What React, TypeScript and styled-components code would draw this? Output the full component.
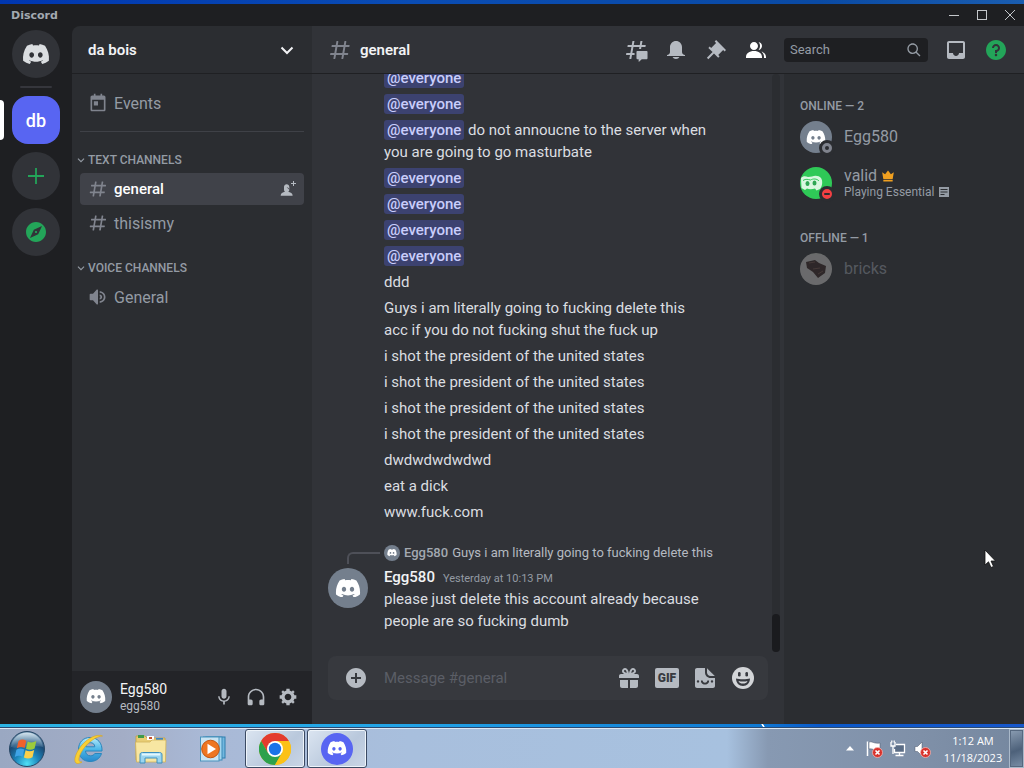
import React from "react";
import styled, { createGlobalStyle } from "styled-components";

const c = {
  rail: "#1e1f22",
  side: "#2b2d31",
  chat: "#313338",
  panel: "#232428",
  input: "#383a40",
  line: "#1f2023",
  muted: "#949ba4",
  icon: "#b5bac1",
  text: "#dbdee1",
  white: "#f2f3f5",
  green: "#23a559",
  blurple: "#5865f2",
};

const GlobalStyle = createGlobalStyle`
  * { box-sizing: border-box; }
  body { margin: 0; background: ${c.rail}; font-family: Roboto, "Noto Sans", sans-serif; font-size: 15px; color: ${c.text}; overflow: hidden; }
  button { border: 0; padding: 0; margin: 0; background: none; color: inherit; font: inherit; cursor: pointer; }
  input { border: 0; padding: 0; margin: 0; background: none; outline: 0; font: inherit; }
  h1, h2, h3, p, ul { margin: 0; padding: 0; font-weight: inherit; font-size: inherit; }
  ul { list-style: none; }
  a { color: inherit; text-decoration: none; }
  svg { display: block; flex: none; }
`;

/* ---------- icons ---------- */

const PATHS = {
  hash: "M5.88657 21C5.57547 21 5.3399 20.7189 5.39427 20.4126L6.00001 17H2.59511C2.28449 17 2.04905 16.7198 2.10259 16.4138L2.27759 15.4138C2.31946 15.1746 2.52722 15 2.77011 15H6.35001L7.41001 9H4.00511C3.69449 9 3.45905 8.71977 3.51259 8.41381L3.68759 7.41381C3.72946 7.17456 3.93722 7 4.18011 7H7.76001L8.39677 3.41262C8.43914 3.17391 8.64664 3 8.88907 3H9.87344C10.1845 3 10.4201 3.28107 10.3657 3.58738L9.76001 7H15.76L16.3968 3.41262C16.4391 3.17391 16.6466 3 16.8891 3H17.8734C18.1845 3 18.4201 3.28107 18.3657 3.58738L17.76 7H21.1649C21.4755 7 21.711 7.28023 21.6574 7.58619L21.4824 8.58619C21.4406 8.82544 21.2328 9 20.9899 9H17.41L16.35 15H19.7549C20.0655 15 20.301 15.2802 20.2474 15.5862L20.0724 16.5862C20.0306 16.8254 19.8228 17 19.5799 17H16L15.3632 20.5874C15.3209 20.8261 15.1134 21 14.8709 21H13.8866C13.5755 21 13.3399 20.7189 13.3943 20.4126L14 17H8.00001L7.36325 20.5874C7.32088 20.8261 7.11337 21 6.87094 21H5.88657ZM9.41045 9L8.35045 15H14.3504L15.4104 9H9.41045Z",
  threads:
    "M5.43309 21C5.35842 21 5.30189 20.9325 5.31494 20.859L5.99991 17H2.14274C2.06819 17 2.01168 16.9327 2.02453 16.8593L2.33253 15.0993C2.34258 15.0419 2.39244 15 2.45074 15H6.34991L7.40991 9H3.55274C3.47819 9 3.42168 8.93274 3.43453 8.85931L3.74253 7.09931C3.75258 7.04189 3.80244 7 3.86074 7H7.75991L8.45234 3.09903C8.46251 3.04174 8.51231 3 8.57049 3H10.3267C10.4014 3 10.4579 3.06746 10.4449 3.14097L9.75991 7H15.7599L16.4523 3.09903C16.4625 3.04174 16.5123 3 16.5705 3H18.3267C18.4014 3 18.4579 3.06746 18.4449 3.14097L17.7599 7H21.6171C21.6916 7 21.7481 7.06725 21.7353 7.14069L21.4273 8.90069C21.4172 8.95811 21.3674 9 21.3091 9H17.4099L17.0495 11.04H15.05L15.4104 9H9.41035L8.35035 15H10.5599V17H7.99991L7.30749 20.901C7.29732 20.9583 7.24752 21 7.18934 21H5.43309ZM13.4399 12.96C12.9097 12.96 12.4799 13.3898 12.4799 13.92V20.2213C12.4799 20.7515 12.9097 21.1813 13.4399 21.1813H14.3999C14.5325 21.1813 14.6399 21.2887 14.6399 21.4213V23.4597C14.6399 23.6677 14.8865 23.7773 15.0408 23.6378L17.4858 21.4289C17.6622 21.2695 17.8916 21.1813 18.1294 21.1813H22.5599C23.0901 21.1813 23.5199 20.7515 23.5199 20.2213V13.92C23.5199 13.3898 23.0901 12.96 22.5599 12.96H13.4399Z",
  bell: "M18 9V14C18 15.657 19.344 17 21 17V18H3V17C4.656 17 6 15.657 6 14V9C6 5.686 8.686 3 12 3C15.314 3 18 5.686 18 9ZM11.9999 21C10.5239 21 9.24793 20.19 8.55493 19H15.4449C14.7519 20.19 13.4759 21 11.9999 21Z",
  pin: "M22 12L12.101 2.10101L10.686 3.51401L12.101 4.92901L7.15096 9.87801V9.88001L5.73596 8.46501L4.32196 9.88001L8.56496 14.122L2.90796 19.778L4.32196 21.192L9.97896 15.536L14.222 19.778L15.636 18.364L14.222 16.95L19.171 12H19.172L20.586 13.414L22 12Z",
  members:
    "M14 8.006C14 10.211 12.206 12.006 10 12.006C7.795 12.006 6 10.211 6 8.006C6 5.801 7.794 4.006 10 4.006C12.206 4.006 14 5.801 14 8.006ZM2 19.006C2 15.473 5.29 13.006 10 13.006C14.711 13.006 18 15.473 18 19.006V20.006H2V19.006ZM20 20.006H22V19.006C22 16.443 20.27 14.442 17.521 13.535C19.062 14.913 20 16.806 20 19.006V20.006ZM14.883 11.908C16.666 11.504 18 9.908 18 8.006C18 5.969 16.469 4.282 14.497 4.037C15.432 5.095 16 6.485 16 8.006C16 9.449 15.489 10.774 14.638 11.81C14.72 11.842 14.802 11.874 14.883 11.908Z",
  inbox:
    "M19 3H4.99C3.88 3 3.01 3.89 3.01 5L3 19C3 20.1 3.88 21 4.99 21H19C20.1 21 21 20.1 21 19V5C21 3.89 20.1 3 19 3ZM19 15H15C15 16.66 13.65 18 12 18C10.35 18 9 16.66 9 15H4.99V5H19V15Z",
  help: "M12 2C6.486 2 2 6.487 2 12C2 17.515 6.486 22 12 22C17.514 22 22 17.515 22 12C22 6.487 17.514 2 12 2ZM12 18.25C11.31 18.25 10.75 17.691 10.75 17C10.75 16.31 11.31 15.75 12 15.75C12.69 15.75 13.25 16.31 13.25 17C13.25 17.691 12.69 18.25 12 18.25ZM13 13.875V15H11V12H12C13.104 12 14 11.103 14 10C14 8.896 13.104 8 12 8C10.896 8 10 8.896 10 10H8C8 7.795 9.795 6 12 6C14.205 6 16 7.795 16 10C16 11.861 14.723 13.429 13 13.875Z",
  mic: "M14.99 11C14.99 12.66 13.66 14 12 14C10.34 14 9 12.66 9 11V5C9 3.34 10.34 2 12 2C13.66 2 15 3.34 15 5L14.99 11ZM12 16.1C14.76 16.1 17.3 14 17.3 11H19C19 14.42 16.28 17.24 13 17.72V21H11V17.72C7.72 17.23 5 14.41 5 11H6.7C6.7 14 9.24 16.1 12 16.1Z",
  headphones:
    "M12 2.003C6.486 2.003 2 6.488 2 12.003V20.003C2 21.107 2.895 22.003 4 22.003H6C7.104 22.003 8 21.107 8 20.003V17.003C8 15.899 7.104 15.003 6 15.003H4V12.003C4 7.591 7.589 4.003 12 4.003C16.411 4.003 20 7.591 20 12.003V15.003H18C16.896 15.003 16 15.899 16 17.003V20.003C16 21.107 16.896 22.003 18 22.003H20C21.104 22.003 22 21.107 22 20.003V12.003C22 6.488 17.514 2.003 12 2.003Z",
  gear: "M19.738 10H22V14H19.739C19.498 14.931 19.1 15.798 18.565 16.564L20 18L18 20L16.565 18.564C15.797 19.099 14.932 19.498 14 19.738V22H10V19.738C9.069 19.498 8.203 19.099 7.436 18.564L6 20L4 18L5.436 16.564C4.901 15.799 4.502 14.932 4.262 14H2V10H4.262C4.502 9.068 4.9 8.202 5.436 7.436L4 6L6 4L7.436 5.436C8.202 4.9 9.068 4.502 10 4.262V2H14V4.261C14.932 4.502 15.797 4.9 16.565 5.435L18 3.999L20 5.999L18.564 7.436C19.099 8.202 19.498 9.069 19.738 10ZM12 16C14.209 16 16 14.209 16 12C16 9.791 14.209 8 12 8C9.791 8 8 9.791 8 12C8 14.209 9.791 16 12 16Z",
  speaker:
    "M11.383 3.079C11.009 2.925 10.579 3.01 10.293 3.296L6 8.002H3C2.45 8.002 2 8.453 2 9.002V15.002C2 15.552 2.45 16.002 3 16.002H6L10.293 20.71C10.579 20.996 11.009 21.082 11.383 20.927C11.757 20.772 12 20.407 12 20.002V4.002C12 3.599 11.757 3.232 11.383 3.079ZM14 5.002V7.002C16.757 7.002 19 9.246 19 12.002C19 14.759 16.757 17.002 14 17.002V19.002C17.86 19.002 21 15.863 21 12.002C21 8.143 17.86 5.002 14 5.002ZM14 9.002C15.654 9.002 17 10.349 17 12.002C17 13.657 15.654 15.002 14 15.002V13.002C14.551 13.002 15 12.553 15 12.002C15 11.451 14.551 11.002 14 11.002V9.002Z",
  gift: "M16.886 7.999H20C21.104 7.999 22 8.896 22 9.999V11.999H2V9.999C2 8.896 2.897 7.999 4 7.999H7.114C6.663 7.764 6.236 7.477 5.879 7.121C4.709 5.951 4.709 4.048 5.879 2.879C7.012 1.746 8.986 1.746 10.121 2.877C11.758 4.514 11.979 7.595 11.998 7.941L12.002 7.941C12.021 7.595 12.242 4.514 13.879 2.877C15.014 1.745 16.986 1.746 18.121 2.877C19.29 4.049 19.29 5.952 18.121 7.121C17.764 7.477 17.337 7.764 16.886 7.999ZM7.293 5.707C6.903 5.316 6.903 4.682 7.293 4.292C7.481 4.103 7.732 4 8 4C8.268 4 8.519 4.103 8.707 4.292C9.297 4.882 9.641 5.94 9.825 6.822C8.945 6.639 7.879 6.293 7.293 5.707ZM14.174 6.824C14.359 5.941 14.702 4.883 15.293 4.293C15.481 4.103 15.732 4 16 4C16.268 4 16.519 4.103 16.706 4.291C17.096 4.682 17.097 5.316 16.707 5.707C16.116 6.298 15.057 6.642 14.174 6.824ZM3 13.999V19.999C3 21.102 3.896 21.999 5 21.999H11V13.999H3ZM13 13.999V21.999H19C20.104 21.999 21 21.102 21 19.999V13.999H13Z",
  calendar:
    "M7 1H9V3H15V1H17V3H19C20.1 3 21 3.9 21 5V20C21 21.1 20.1 22 19 22H5C3.9 22 3 21.1 3 20V5C3 3.9 3.9 3 5 3H7V1ZM5 8V20H19V8H5ZM7 10H12V15H7V10Z",
  plus: "M20 11.111H12.889V4H11.111V11.111H4V12.889H11.111V20H12.889V12.889H20V11.111Z",
  attach:
    "M12 2C6.477 2 2 6.477 2 12C2 17.522 6.477 22 12 22C17.523 22 22 17.522 22 12C22 6.477 17.522 2 12 2ZM17 13H13V17H11V13H7V11H11V7H13V11H17V13Z",
  compass:
    "M12 2C6.48 2 2 6.48 2 12C2 17.52 6.48 22 12 22C17.52 22 22 17.52 22 12C22 6.48 17.52 2 12 2ZM14.19 14.19L6 18L9.81 9.81L18 6L14.19 14.19ZM12 10.9C11.39 10.9 10.9 11.39 10.9 12C10.9 12.61 11.39 13.1 12 13.1C12.61 13.1 13.1 12.61 13.1 12C13.1 11.39 12.61 10.9 12 10.9Z",
  search:
    "M21.707 20.293L16.314 14.9C17.403 13.504 18 11.799 18 10C18 7.863 17.167 5.854 15.656 4.344C14.146 2.832 12.137 2 10 2C7.863 2 5.854 2.832 4.344 4.344C2.833 5.854 2 7.863 2 10C2 12.137 2.833 14.146 4.344 15.656C5.854 17.168 7.863 18 10 18C11.799 18 13.504 17.404 14.9 16.314L20.293 21.706L21.707 20.293ZM10 16C8.397 16 6.891 15.376 5.758 14.243C4.624 13.11 4 11.603 4 10C4 8.398 4.624 6.891 5.758 5.758C6.891 4.624 8.397 4 10 4C11.603 4 13.109 4.624 14.242 5.758C15.376 6.891 16 8.398 16 10C16 11.603 15.376 13.11 14.242 14.243C13.109 15.376 11.603 16 10 16Z",
  crown: "M2 5.5L7 9L12 2.5L17 9L22 5.5L20 17H4L2 5.5ZM4 18.5H20V21.5H4V18.5Z",
  invite:
    "M21 3H24V4.5H21V7.5H19.5V4.5H16.5V3H19.5V0H21V3ZM10 9.5C12.4 9.5 14 11.3 14 13.2C14 15.2 12.2 16.2 12.2 16.2C15.6 16.7 19 18.6 19 22H1C1 18.6 4 16.7 7.6 16.2C7.6 16.2 6 15.2 6 13.2V9C6 6.8 7.8 5 10 5C12.2 5 14 6.8 14 9V13.2Z",
  activity:
    "M2 2H22V22H2V2ZM5 6V8H19V6H5ZM5 11V13H19V11H5ZM5 16V18H13V16H5Z",
};

const Icon = ({ name, size = 24 }: { name: keyof typeof PATHS; size?: number }) => (
  <svg width={size} height={size} viewBox="0 0 24 24" fill="currentColor" fillRule="evenodd" aria-hidden="true">
    <path d={PATHS[name]} />
  </svg>
);

const CLYDE =
  "M23.0212 1.67671C21.3107 0.879656 19.5079 0.318797 17.6584 0C17.4062 0.461742 17.1749 0.934541 16.9708 1.4184C15.003 1.12145 12.9974 1.12145 11.0283 1.4184C10.819 0.934541 10.589 0.461744 10.3368 0.00546311C8.48074 0.324393 6.67795 0.885118 4.96746 1.68231C1.56727 6.77853 0.649666 11.7538 1.11108 16.652C3.10102 18.1418 5.3262 19.2743 7.69177 20C8.22338 19.2743 8.69519 18.4993 9.09812 17.691C8.32996 17.3997 7.58522 17.0424 6.87684 16.6135C7.06531 16.4762 7.24726 16.3387 7.42403 16.1847C11.5911 18.1749 16.408 18.1749 20.5763 16.1847C20.7531 16.3332 20.9351 16.4762 21.1171 16.6135C20.41 17.0369 19.6639 17.3997 18.897 17.691C19.3052 18.4993 19.7718 19.2689 20.3021 19.9945C22.6677 19.2689 24.8929 18.1364 26.8828 16.6466H26.8893C27.43 10.9731 25.9665 6.04728 23.0212 1.67671ZM9.68041 13.6383C8.39754 13.6383 7.34085 12.4453 7.34085 10.994C7.34085 9.54272 8.37155 8.34973 9.68041 8.34973C10.9893 8.34973 12.0395 9.54272 12.0187 10.994C12.0187 12.4453 10.9828 13.6383 9.68041 13.6383ZM18.3161 13.6383C17.0332 13.6383 15.9765 12.4453 15.9765 10.994C15.9765 9.54272 17.0124 8.34973 18.3161 8.34973C19.6184 8.34973 20.6751 9.54272 20.6543 10.994C20.6543 12.4453 19.6184 13.6383 18.3161 13.6383Z";

const Clyde = ({ width = 28 }: { width?: number }) => (
  <svg width={width} height={(width * 20) / 28} viewBox="0 0 28 20" fill="currentColor" aria-hidden="true">
    <path d={CLYDE} />
  </svg>
);

const Chevron = ({ size, stroke }: { size: number; stroke: number }) => (
  <svg width={size} height={size} viewBox="0 0 18 18" fill="none" stroke="currentColor" strokeWidth={stroke} aria-hidden="true">
    <path d="M3.5 6.5L9 12L14.5 6.5" />
  </svg>
);

const Sticker = () => (
  <svg width="24" height="24" viewBox="0 0 24 24" fill="currentColor" aria-hidden="true">
    <path
      fillRule="evenodd"
      d="M4 2H12V6.5C12 9.5 14.5 12 17.5 12H22V20C22 21.1 21.1 22 20 22H4C2.9 22 2 21.1 2 20V4C2 2.9 2.9 2 4 2ZM5 14.2A1.2 1.2 0 1 0 5 16.6A1.2 1.2 0 1 0 5 14.2ZM19 14.2A1.2 1.2 0 1 0 19 16.6A1.2 1.2 0 1 0 19 14.2ZM8 14.6V16C9 18 10.4 18.6 12 18.6C13.6 18.6 15 18 16 16V14.6H14.4C14 16.2 13.2 16.8 12 16.8C10.8 16.8 10 16.2 9.6 14.6H8Z"
    />
    <path d="M14 2.2L21.8 10H17.5C15.6 10 14 8.4 14 6.5V2.2Z" />
  </svg>
);

const Smile = () => (
  <svg width="24" height="24" viewBox="0 0 24 24" aria-hidden="true">
    <circle cx="12" cy="12" r="11" fill="#d3d5d8" />
    <rect x="7" y="6" width="2.6" height="4.6" rx="1.3" fill="#383a40" />
    <rect x="14.4" y="6" width="2.6" height="4.6" rx="1.3" fill="#383a40" />
    <path d="M5 12.5C8 13.6 16 13.6 19 12.5C19 17 16 20 12 20C8 20 5 17 5 12.5Z" fill="#383a40" />
    <path d="M7.5 15C10 15.8 14 15.8 16.5 15C16 17 14 17.6 12 17.6C10 17.6 8 17 7.5 15Z" fill="#d3d5d8" />
  </svg>
);

/* ---------- frame ---------- */

const Desktop = styled.div`
  height: 100vh;
  display: flex;
  flex-direction: column;
`;

const TopStrip = styled.div`
  flex: none;
  height: 4px;
  background: linear-gradient(90deg, #0036b0, #0a4cb4 40%, #0a4aa4 80%, #1a5db0);
`;

const BottomStrip = styled.div`
  flex: none;
  height: 4px;
  background:
    linear-gradient(60deg, transparent 48%, #fff 49%, #fff 51%, transparent 52%) 76% 0 / 60px 100% no-repeat,
    linear-gradient(90deg, #2cb4e4, #22a4e8 40%, #0f7ad4 74%, #0a58c8 80%, #1757cc);
  border-bottom: 1px solid #2c4a72;
`;

const TitleBar = styled.header`
  flex: none;
  height: 22px;
  display: flex;
  justify-content: space-between;
  background: ${c.rail};
`;

const Wordmark = styled.span`
  padding-left: 11px;
  font: bold 11px/24px "DejaVu Sans", sans-serif;
  color: #a3a9b1;
`;

const WindowButtons = styled.div`
  display: flex;
`;

const WindowButton = styled.button`
  width: 28px;
  display: grid;
  place-items: center;
  color: #c4c7cb;
`;

const Body = styled.div`
  flex: 1;
  min-height: 0;
  display: flex;
  background: ${c.rail};
`;

/* ---------- server rail ---------- */

const Rail = styled.nav`
  flex: none;
  width: 72px;
  display: flex;
  flex-direction: column;
  align-items: center;
  gap: 8px;
  padding-top: 4px;
`;

const Server = styled.button<{ $active?: boolean; $tone?: string }>`
  position: relative;
  width: 48px;
  height: 48px;
  display: grid;
  place-items: center;
  border-radius: ${(p) => (p.$active ? 16 : 24)}px;
  background: ${(p) => (p.$active ? c.blurple : c.chat)};
  color: ${(p) => p.$tone || c.text};
  font-size: 18px;
  font-weight: 500;
`;

const Pill = styled.span`
  position: absolute;
  left: -12px;
  top: 4px;
  width: 4px;
  height: 40px;
  border-radius: 0 4px 4px 0;
  background: #fff;
`;

const RailLine = styled.div`
  width: 32px;
  height: 2px;
  border-radius: 1px;
  background: #35363c;
`;

/* ---------- channel sidebar ---------- */

const Sidebar = styled.aside`
  flex: none;
  width: 240px;
  display: flex;
  flex-direction: column;
  background: ${c.side};
  border-top-left-radius: 8px;
`;

const ServerHeader = styled.button`
  height: 48px;
  flex: none;
  display: flex;
  align-items: center;
  justify-content: space-between;
  padding: 0 16px;
  border-bottom: 1px solid ${c.line};
  color: ${c.white};
  font-weight: 600;
`;

const ChannelScroller = styled.div`
  flex: 1;
  min-height: 0;
  padding: 13px 8px 0;
`;

const ChannelList = styled.ul`
  display: flex;
  flex-direction: column;
  gap: 2px;
  padding-bottom: 1px;
`;

const Channel = styled.a<{ $selected?: boolean }>`
  height: 32px;
  display: flex;
  align-items: center;
  gap: 6px;
  padding: 0 8px;
  border-radius: 4px;
  background: ${(p) => (p.$selected ? "#404249" : "transparent")};
  color: ${(p) => (p.$selected ? "#fff" : c.muted)};
  font-size: ${(p) => (p.$selected ? 15 : 16)}px;
  font-weight: ${(p) => (p.$selected ? 500 : 400)};
  > svg:first-child { color: #80848e; }
`;

const ChannelAction = styled.button`
  margin-left: auto;
  color: ${c.icon};
`;

const Divider = styled.div`
  height: 1px;
  margin-top: 12px;
  background: #3f4147;
`;

const Category = styled.h3`
  display: flex;
  align-items: center;
  gap: 2px;
  margin: 20px 0 5px -4px;
  font-size: 12px;
  line-height: 16px;
  font-weight: 500;
  color: ${c.muted};
`;

const UserPanel = styled.section`
  flex: none;
  height: 53px;
  display: flex;
  align-items: center;
  gap: 8px;
  padding: 0 8px 2px;
  background: ${c.panel};
`;

const UserNames = styled.div`
  flex: 1;
  font-size: 12px;
  line-height: 16px;
  color: ${c.icon};
`;

const UserName = styled.div`
  font-size: 14px;
  line-height: 18px;
  color: ${c.white};
`;

const PanelButtons = styled.div`
  display: flex;
`;

const PanelButton = styled.button`
  width: 32px;
  height: 32px;
  display: grid;
  place-items: center;
  color: ${c.icon};
`;

const Avatar = styled.span<{ $size: number; $bg?: string }>`
  position: relative;
  flex: none;
  width: ${(p) => p.$size}px;
  height: ${(p) => p.$size}px;
  display: grid;
  place-items: center;
  border-radius: 50%;
  background: ${(p) => p.$bg || "#747f8d"};
  color: #fff;
`;

/* ---------- chat ---------- */

const Main = styled.main`
  flex: 1;
  min-width: 0;
  display: flex;
  flex-direction: column;
  background: ${c.chat};
`;

const ChatHeader = styled.header`
  flex: none;
  height: 48px;
  display: flex;
  align-items: center;
  gap: 8px;
  padding: 0 16px;
  border-bottom: 1px solid ${c.line};
  color: #80848e;
`;

const ChannelTitle = styled.h1`
  flex: 1;
  color: ${c.white};
  font-weight: 600;
`;

const Toolbar = styled.div`
  display: flex;
  align-items: center;
  gap: 16px;
`;

const ToolButton = styled.button<{ $tone?: string }>`
  color: ${(p) => p.$tone || c.icon};
`;

const SearchBox = styled.label`
  width: 144px;
  height: 24px;
  display: flex;
  align-items: center;
  justify-content: space-between;
  padding: 0 6px;
  border-radius: 4px;
  background: ${c.rail};
  color: ${c.muted};
`;

const SearchInput = styled.input`
  flex: 1;
  min-width: 0;
  font-size: 13px;
  color: ${c.text};
  &::placeholder { color: ${c.muted}; opacity: 1; }
`;

const Columns = styled.div`
  flex: 1;
  min-height: 0;
  display: flex;
`;

const Chat = styled.section`
  flex: 1;
  min-width: 0;
  display: flex;
  flex-direction: column;
`;

const LogRow = styled.div`
  flex: 1;
  min-height: 0;
  display: flex;
  padding-right: 4px;
`;

const Log = styled.div`
  flex: 1;
  min-width: 0;
  display: flex;
  flex-direction: column;
  justify-content: flex-end;
  overflow: hidden;
  padding: 0 48px 22px 0;
`;

const Track = styled.div`
  width: 8px;
  margin-bottom: 4px;
  display: flex;
  flex-direction: column;
  justify-content: flex-end;
  border-radius: 4px;
  background: ${c.side};
`;

const Thumb = styled.div`
  height: 38px;
  border-radius: 4px;
  background: #1a1b1e;
`;

const Message = styled.p`
  flex: none;
  padding: 2px 0 2px 72px;
  line-height: 22px;
`;

const Mention = styled.span`
  display: inline-block;
  padding: 0 3px;
  line-height: 20px;
  border-radius: 3px;
  background: #3c4270;
  color: #c9cdfb;
  font-weight: 500;
`;

const ReplyMessage = styled.article`
  flex: none;
  display: grid;
  grid-template-columns: 40px minmax(0, 1fr);
  column-gap: 16px;
  margin-top: 17px;
  padding: 2px 0 2px 16px;
  line-height: 22px;
`;

const Spine = styled.span`
  height: 12px;
  margin: 8px -12px 0 19px;
  border-left: 2px solid #4e5058;
  border-top: 2px solid #4e5058;
  border-top-left-radius: 6px;
`;

const ReplyPreview = styled.div`
  display: flex;
  align-items: center;
  gap: 4px;
  margin-bottom: 4px;
  font-size: 13px;
  line-height: 18px;
  color: ${c.icon};
  white-space: nowrap;
  overflow: hidden;
  b { font-weight: 500; color: #a3a9b1; }
`;

const AvatarCell = styled.div`
  padding-top: 2px;
`;

const Author = styled.h3`
  height: 22px;
  display: flex;
  align-items: baseline;
  gap: 8px;
  font-weight: 500;
  color: ${c.white};
  time { font-size: 11px; font-weight: 400; color: ${c.muted}; }
`;

const Composer = styled.form`
  flex: none;
  height: 44px;
  margin: 0 16px 24px;
  display: flex;
  align-items: center;
  padding: 0 13px 0 16px;
  border-radius: 8px;
  background: #37393e;
  color: ${c.icon};
`;

const ComposerInput = styled.input`
  flex: 1;
  min-width: 0;
  margin-left: 16px;
  color: ${c.text};
  &::placeholder { color: #5b5e66; opacity: 1; }
`;

const ComposerTools = styled.div`
  display: flex;
  align-items: center;
  gap: 14px;
`;

const GifButton = styled.button`
  width: 24px;
  height: 20px;
  border-radius: 2px;
  background: ${c.icon};
  color: ${c.input};
  font-size: 12px;
  font-weight: 900;
  line-height: 20px;
  text-align: center;
`;

/* ---------- members ---------- */

const Members = styled.aside`
  flex: none;
  width: 240px;
  padding: 1px 8px 0;
  background: ${c.side};
`;

const MemberHeading = styled.h2`
  padding: 23px 0 0 8px;
  font-size: 12px;
  line-height: 16px;
  font-weight: 500;
  color: ${c.muted};
`;

const Member = styled.a<{ $dim?: boolean }>`
  height: 44px;
  margin: 1px 0 2px;
  display: flex;
  align-items: center;
  gap: 12px;
  padding: 0 8px;
  color: ${c.muted};
  opacity: ${(p) => (p.$dim ? 0.4 : 1)};
`;

const MemberName = styled.div`
  display: flex;
  align-items: center;
  gap: 4px;
  font-size: 16px;
  line-height: 18px;
  > svg { color: #f0a020; }
`;

const Activity = styled.div`
  display: flex;
  align-items: center;
  gap: 4px;
  font-size: 12px;
  line-height: 14px;
`;

const Status = styled.span<{ $kind: "offline" | "dnd" }>`
  position: absolute;
  right: -3px;
  bottom: -3px;
  width: 16px;
  height: 16px;
  display: grid;
  place-items: center;
  border: 3px solid ${c.side};
  border-radius: 50%;
  background: ${(p) => (p.$kind === "dnd" ? "#f23f43" : "#80848e")};
  &::after {
    content: "";
    width: ${(p) => (p.$kind === "dnd" ? 6 : 4)}px;
    height: ${(p) => (p.$kind === "dnd" ? 2 : 4)}px;
    border-radius: 2px;
    background: ${c.side};
  }
`;

const Cursor = styled.svg`
  position: fixed;
  right: 28px;
  bottom: 199px;
  pointer-events: none;
`;

/* ---------- taskbar ---------- */

const Taskbar = styled.footer`
  flex: none;
  height: 40px;
  display: flex;
  align-items: stretch;
  border-top: 1px solid #dce8f4;
  background: linear-gradient(90deg, #9aa8c2, #a3adc6 12%, #a9b9d6 20%, #a8bfdd 40%, #a7c1df 71%, #8799b2 75%, #7f90a8 90%, #75879f);
`;

const Launchers = styled.div`
  flex: 1;
  display: flex;
  align-items: center;
  gap: 2px;
`;

const Launcher = styled.button<{ $open?: boolean }>`
  width: 60px;
  height: 39px;
  display: grid;
  place-items: center;
  border: 1px solid ${(p) => (p.$open ? "#3b4a63" : "transparent")};
  border-radius: 3px;
  box-shadow: ${(p) => (p.$open ? "inset 0 0 0 1px #eef4fa" : "none")};
  background: ${(p) => (p.$open ? "linear-gradient(135deg, #dbe5f1, #b9c8dc 60%, #cad6e6)" : "none")};
`;

const StartButton = styled.button`
  width: 54px;
  margin-right: 3px;
  display: grid;
  place-items: center;
`;

const Tray = styled.div`
  display: flex;
  align-items: center;
  gap: 6px;
`;

const TrayButton = styled.button`
  width: 18px;
  height: 18px;
  display: grid;
  place-items: center;
`;

const Clock = styled.time`
  margin: 0 2px;
  width: 68px;
  text-align: center;
  color: #fff;
  font: 11px/17px "Open Sans", sans-serif;
`;

const ShowDesktop = styled.button`
  width: 15px;
  align-self: stretch;
  border: 1px solid #a9b8c9;
  box-shadow: inset 0 0 0 1px #56687f;
  background: linear-gradient(160deg, #8b9db3, #4d617a 55%, #7b8fa7);
`;

const StartOrb = () => (
  <svg width="38" height="38" viewBox="0 0 38 38" aria-hidden="true">
    <defs>
      <radialGradient id="orb" cx="50%" cy="92%" r="85%">
        <stop offset="0" stopColor="#4fe0f5" />
        <stop offset="0.4" stopColor="#1c85bb" />
        <stop offset="0.75" stopColor="#1b4a75" />
        <stop offset="1" stopColor="#5f86a6" />
      </radialGradient>
      <linearGradient id="orbShine" x1="0" y1="0" x2="0" y2="1">
        <stop offset="0" stopColor="#e8f3f9" stopOpacity="0.85" />
        <stop offset="1" stopColor="#9cc2d8" stopOpacity="0.15" />
      </linearGradient>
    </defs>
    <circle cx="19" cy="19" r="17.5" fill="url(#orb)" stroke="#274765" />
    <path d="M3 17C4 8 11 2.500 19 2.500C27 2.500 34 8 35 17C27 14 12 20 3 17Z" fill="url(#orbShine)" />
    <path d="M10.500 11C13 9.200 15.500 9.200 18.300 10.800L16.600 18C14 16.500 11.500 16.700 8.800 18.200Z" fill="#f0602b" />
    <path d="M19.700 11.400C22.500 13 25.300 12.700 28.300 11L26.600 18.400C23.800 20 21 20.200 18 18.700Z" fill="#9ccb3b" />
    <path d="M8.400 19.700C11 18.200 13.600 18.200 16.200 19.600L14.500 26.800C12 25.400 9.500 25.600 6.800 27Z" fill="#3fa3e6" />
    <path d="M17.600 20.200C20.500 21.700 23.300 21.500 26.200 19.900L24.500 27.200C21.700 28.800 18.800 28.900 15.900 27.400Z" fill="#fbd04a" />
  </svg>
);

const Explorer = () => (
  <svg width="34" height="34" viewBox="0 0 34 34" aria-hidden="true">
    <defs>
      <linearGradient id="ie" x1="0" y1="0" x2="0" y2="1">
        <stop offset="0" stopColor="#b6eafa" />
        <stop offset="0.5" stopColor="#4bb7e8" />
        <stop offset="1" stopColor="#2788cc" />
      </linearGradient>
    </defs>
    <path
      fillRule="evenodd"
      fill="url(#ie)"
      stroke="#2b86bd"
      d="M18 5.500C25.500 5.500 30.500 11 30 19H13.500C13.700 22 15.500 23.800 18.400 23.800C20.500 23.800 22 23 22.800 21.500H29.500C28 26.500 23.800 29.500 18 29.500C11 29.500 6.500 24.500 6.500 17.500C6.500 10.500 11 5.500 18 5.500ZM13.700 14.800H22.800C22.600 12.200 21 10.700 18.300 10.700C15.600 10.700 14 12.200 13.700 14.800Z"
    />
    <path d="M30.500 4C25 1.500 16 6 10 13C4 20 1 28.500 4 31C5 32 7.500 31.500 10 30C5.500 30.500 6 25 11 17.500C16 10 25 4 30.500 4Z" fill="#f9cf35" stroke="#d8a41c" strokeWidth="0.6" />
  </svg>
);

const Folder = () => (
  <svg width="34" height="32" viewBox="0 0 34 32" aria-hidden="true">
    <path d="M2 3H11L13 5H31V27H2Z" fill="#e8cd74" stroke="#c3a145" strokeWidth="0.8" />
    <rect x="4" y="2" width="6" height="3" fill="#3f9a4a" />
    <rect x="13" y="3" width="7" height="4" fill="#fff" />
    <rect x="15" y="4" width="3" height="2" fill="#c5502f" />
    <rect x="22" y="5" width="7" height="3" fill="#3c86c6" />
    <path d="M1.500 9H16L18 7H32L31.500 29H2.500Z" fill="#f7e6a2" stroke="#d1b35a" strokeWidth="0.8" />
    <path d="M6 30V22C6 20 7 19.500 8.500 19.500H25.500C27 19.500 28 20 28 22V30H23V25H11V30Z" fill="#9ad5ef" stroke="#3e8fbd" />
    <path d="M8 21.500H26" stroke="#e2f6fd" strokeWidth="2" />
  </svg>
);

const MediaPlayer = () => (
  <svg width="28" height="28" viewBox="0 0 28 28" aria-hidden="true">
    <rect x="7" y="2" width="19" height="21" fill="#73b7de" stroke="#2f7eae" />
    <rect x="4.500" y="2" width="18.500" height="23" fill="#a5d6ee" stroke="#3a8ab8" />
    <rect x="1.500" y="2" width="18.500" height="24" fill="#c9e4f3" stroke="#4b94bd" />
    <circle cx="11.500" cy="14" r="8.800" fill="#ee7622" stroke="#c4550f" />
    <path d="M8.500 8.800L17 14L8.500 19.200Z" fill="#fff" />
  </svg>
);

const Chrome = () => (
  <svg width="32" height="32" viewBox="0 0 32 32" aria-hidden="true">
    <circle cx="16" cy="16" r="16" fill="#fbc116" />
    <path d="M2.140 8A16 16 0 0 1 29.860 8H16L9 20Z" fill="#e33b2e" />
    <path d="M2.140 8A16 16 0 0 0 16 32L22.900 20L9.100 20Z" fill="#2da14c" />
    <path d="M29.860 8A16 16 0 0 1 16 32L22.930 20L16 8Z" fill="#fbc116" />
    <circle cx="16" cy="16" r="8" fill="#fff" />
    <circle cx="16" cy="16" r="6.200" fill="#1a73e8" />
  </svg>
);

const ErrorBadge = () => (
  <>
    <circle cx="12.500" cy="12.500" r="5" fill="#d8322c" stroke="#f3b4b0" strokeWidth="0.8" />
    <path d="M10.500 10.500L14.500 14.500M14.500 10.500L10.500 14.500" stroke="#fff" strokeWidth="1.600" />
  </>
);

const messages: { id: number; mention?: boolean; lines: string[] }[] = [
  { id: 1, mention: true, lines: [""] },
  { id: 2, mention: true, lines: [""] },
  { id: 3, mention: true, lines: [" do not annoucne to the server when", "you are going to go masturbate"] },
  { id: 4, mention: true, lines: [""] },
  { id: 5, mention: true, lines: [""] },
  { id: 6, mention: true, lines: [""] },
  { id: 7, mention: true, lines: [""] },
  { id: 8, lines: ["ddd"] },
  { id: 9, lines: ["Guys i am literally going to fucking delete this", "acc if you do not fucking shut the fuck up"] },
  { id: 10, lines: ["i shot the president of the united states"] },
  { id: 11, lines: ["i shot the president of the united states"] },
  { id: 12, lines: ["i shot the president of the united states"] },
  { id: 13, lines: ["i shot the president of the united states"] },
  { id: 14, lines: ["dwdwdwdwdwd"] },
  { id: 15, lines: ["eat a dick"] },
  { id: 16, lines: ["www.fuck.com"] },
];

export default function App() {
  return (
    <Desktop>
      <GlobalStyle />
      <TopStrip />
      <TitleBar>
        <Wordmark>Discord</Wordmark>
        <WindowButtons>
          <WindowButton aria-label="Minimize">
            <svg width="10" height="10" viewBox="0 0 10 10"><path d="M0 5.500H10" stroke="currentColor" /></svg>
          </WindowButton>
          <WindowButton aria-label="Maximize">
            <svg width="10" height="10" viewBox="0 0 10 10"><rect x="0.500" y="0.500" width="9" height="9" fill="none" stroke="currentColor" /></svg>
          </WindowButton>
          <WindowButton aria-label="Close">
            <svg width="10" height="10" viewBox="0 0 10 10"><path d="M0 0L10 10M10 0L0 10" stroke="currentColor" /></svg>
          </WindowButton>
        </WindowButtons>
      </TitleBar>

      <Body>
        <Rail aria-label="Servers">
          <Server aria-label="Direct messages"><Clyde /></Server>
          <RailLine />
          <Server $active $tone="#fff"><Pill />db</Server>
          <Server $tone={c.green} aria-label="Add a server"><Icon name="plus" /></Server>
          <Server $tone={c.green} aria-label="Explore servers"><Icon name="compass" /></Server>
        </Rail>

        <Sidebar>
          <ServerHeader>da bois<Chevron size={18} stroke={2} /></ServerHeader>
          <ChannelScroller>
            <Channel href="#events"><Icon name="calendar" size={20} />Events</Channel>
            <Divider />
            <Category><Chevron size={10} stroke={2} />TEXT CHANNELS</Category>
            <ChannelList>
              <li>
                <Channel href="#general" $selected>
                  <Icon name="hash" size={20} />general
                  <ChannelAction aria-label="Create invite"><Icon name="invite" size={16} /></ChannelAction>
                </Channel>
              </li>
              <li><Channel href="#thisismy"><Icon name="hash" size={20} />thisismy</Channel></li>
            </ChannelList>
            <Category><Chevron size={10} stroke={2} />VOICE CHANNELS</Category>
            <ChannelList>
              <li><Channel href="#voice"><Icon name="speaker" size={20} />General</Channel></li>
            </ChannelList>
          </ChannelScroller>
          <UserPanel>
            <Avatar $size={32}><Clyde width={20} /></Avatar>
            <UserNames><UserName>Egg580</UserName>egg580</UserNames>
            <PanelButtons>
              <PanelButton aria-label="Mute"><Icon name="mic" size={20} /></PanelButton>
              <PanelButton aria-label="Deafen"><Icon name="headphones" size={20} /></PanelButton>
              <PanelButton aria-label="User settings"><Icon name="gear" size={20} /></PanelButton>
            </PanelButtons>
          </UserPanel>
        </Sidebar>

        <Main>
          <ChatHeader>
            <Icon name="hash" />
            <ChannelTitle>general</ChannelTitle>
            <Toolbar>
              <ToolButton aria-label="Threads"><Icon name="threads" /></ToolButton>
              <ToolButton aria-label="Notifications"><Icon name="bell" /></ToolButton>
              <ToolButton aria-label="Pinned messages"><Icon name="pin" /></ToolButton>
              <ToolButton $tone="#fff" aria-label="Member list"><Icon name="members" /></ToolButton>
              <SearchBox>
                <SearchInput type="text" placeholder="Search" aria-label="Search" />
                <Icon name="search" size={16} />
              </SearchBox>
              <ToolButton aria-label="Inbox"><Icon name="inbox" /></ToolButton>
              <ToolButton $tone={c.green} aria-label="Help"><Icon name="help" /></ToolButton>
            </Toolbar>
          </ChatHeader>

          <Columns>
            <Chat>
              <LogRow>
                <Log>
                  {messages.map((m) => (
                    <Message key={m.id}>
                      {m.mention && <Mention>@everyone</Mention>}
                      {m.lines.map((line, i) => (
                        <React.Fragment key={i}>
                          {i > 0 && <br />}
                          {line}
                        </React.Fragment>
                      ))}
                    </Message>
                  ))}
                  <ReplyMessage>
                    <Spine />
                    <ReplyPreview>
                      <Avatar $size={16}><Clyde width={10} /></Avatar>
                      <b>Egg580</b>
                      <span>Guys i am literally going to fucking delete this</span>
                    </ReplyPreview>
                    <AvatarCell><Avatar $size={40}><Clyde width={26} /></Avatar></AvatarCell>
                    <div>
                      <Author>Egg580 <time>Yesterday at 10:13 PM</time></Author>
                      <p>please just delete this account already because<br />people are so fucking dumb</p>
                    </div>
                  </ReplyMessage>
                </Log>
                <Track><Thumb /></Track>
              </LogRow>
              <Composer>
                <ToolButton type="button" aria-label="Attach"><Icon name="attach" /></ToolButton>
                <ComposerInput type="text" placeholder="Message #general" aria-label="Message #general" />
                <ComposerTools>
                  <ToolButton type="button" aria-label="Send a gift"><Icon name="gift" /></ToolButton>
                  <GifButton type="button">GIF</GifButton>
                  <ToolButton type="button" aria-label="Stickers"><Sticker /></ToolButton>
                  <ToolButton type="button" aria-label="Emoji"><Smile /></ToolButton>
                </ComposerTools>
              </Composer>
            </Chat>

            <Members>
              <MemberHeading>ONLINE — 2</MemberHeading>
              <Member href="#egg580">
                <Avatar $size={32}><Clyde width={20} /><Status $kind="offline" /></Avatar>
                <MemberName>Egg580</MemberName>
              </Member>
              <Member href="#valid">
                <Avatar $size={32} $bg="#2fc957">
                  <svg width="32" height="32" viewBox="0 0 32 32" aria-hidden="true">
                    <path d="M1 11C3 8.500 6 9 8 10L12 9.500C15 8 19 8.500 21 11C23 14 22.500 19 20 22L16.500 23.500L15 21.500C12 22.500 9 22.500 7 21.500L5 23L1.500 21Z" fill="#d9f7e0" />
                    <ellipse cx="7.500" cy="16.500" rx="2" ry="2.500" fill="#2fa653" />
                    <ellipse cx="14.500" cy="16" rx="2" ry="2.500" fill="#2fa653" />
                    <path d="M3 13.500C6 11.500 8 12.500 10.500 13C13 11.500 17 11.500 19 14" stroke="#2fc957" fill="none" />
                  </svg>
                  <Status $kind="dnd" />
                </Avatar>
                <div>
                  <MemberName>valid <Icon name="crown" size={14} /></MemberName>
                  <Activity>Playing Essential <Icon name="activity" size={12} /></Activity>
                </div>
              </Member>
              <MemberHeading>OFFLINE — 1</MemberHeading>
              <Member href="#bricks" $dim>
                <Avatar $size={32} $bg="#c9c7c4">
                  <svg width="32" height="32" viewBox="0 0 32 32" aria-hidden="true">
                    <path d="M6 9L15 7L19 10L26 13L25 20L18 25L13 19L7 15Z" fill="#33201e" />
                    <path d="M9 10L15 9M13 16L20 15M18 21L23 18" stroke="#6a4a42" />
                  </svg>
                </Avatar>
                <MemberName>bricks</MemberName>
              </Member>
            </Members>
          </Columns>
        </Main>
      </Body>

      <BottomStrip />
      <Taskbar>
        <Launchers>
          <StartButton aria-label="Start"><StartOrb /></StartButton>
          <Launcher aria-label="Internet Explorer"><Explorer /></Launcher>
          <Launcher aria-label="File Explorer"><Folder /></Launcher>
          <Launcher aria-label="Media Player"><MediaPlayer /></Launcher>
          <Launcher $open aria-label="Chrome"><Chrome /></Launcher>
          <Launcher $open aria-label="Discord">
            <Avatar $size={32} $bg={c.blurple}><Clyde width={20} /></Avatar>
          </Launcher>
        </Launchers>
        <Tray>
          <TrayButton aria-label="Show hidden icons">
            <svg width="8" height="5" viewBox="0 0 8 5"><path d="M4 0L8 4.500H0Z" fill="#fff" /></svg>
          </TrayButton>
          <TrayButton aria-label="Action center">
            <svg width="18" height="18" viewBox="0 0 18 18">
              <path d="M2.500 1.500V16" stroke="#fff" strokeWidth="1.500" />
              <path d="M4 2C7 1 9 4 15 3V10C10 11 7 8 4 9Z" fill="#fff" stroke="#4a5568" strokeWidth="0.500" />
              <ErrorBadge />
            </svg>
          </TrayButton>
          <TrayButton aria-label="Network">
            <svg width="18" height="18" viewBox="0 0 18 18" fill="none" stroke="#fff" strokeWidth="1.300">
              <path d="M7 4.500H15.500V12.500H5.500V9" fill="#5b6d86" />
              <path d="M10.500 12.500V15.500M6.500 15.500H14.500M2 2V6H6V2M2.800 0.500V2.500M5.200 0.500V2.500M4 6V14" />
            </svg>
          </TrayButton>
          <TrayButton aria-label="Volume">
            <svg width="18" height="18" viewBox="0 0 18 18">
              <path d="M2 6.500H4.500L9 2V16L4.500 11.500H2Z" fill="#fff" stroke="#4a5568" strokeWidth="0.500" />
              <ErrorBadge />
            </svg>
          </TrayButton>
          <Clock>1:12 AM<br />11/18/2023</Clock>
        </Tray>
        <ShowDesktop aria-label="Show desktop" />
      </Taskbar>

      <Cursor width="12" height="20" viewBox="0 0 12 20" aria-hidden="true">
        <path d="M1 1V16L4.500 12.800L7 18.500L9.500 17.400L7 12H11.500Z" fill="#fff" stroke="#111" strokeWidth="0.800" />
      </Cursor>
    </Desktop>
  );
}
